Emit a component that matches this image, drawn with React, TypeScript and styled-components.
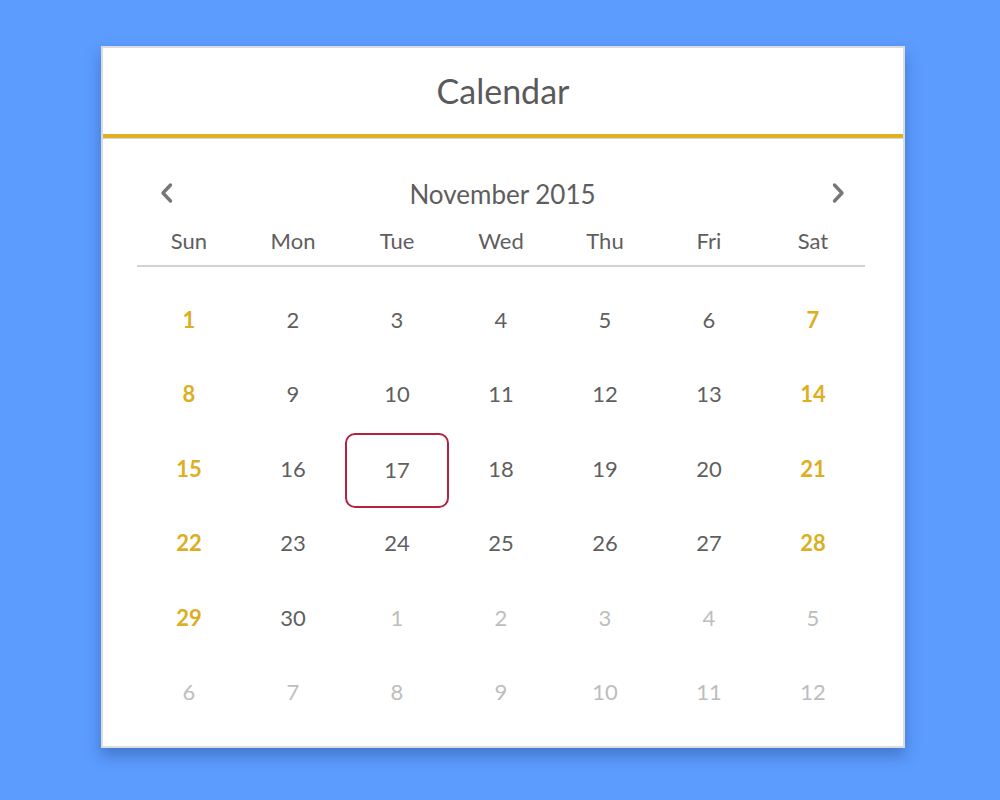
import React from "react";
import styled, { createGlobalStyle, css } from "styled-components";

const Global = createGlobalStyle`
  html, body { margin: 0; padding: 0; }
  body {
    background: #5c9cff;
    font-family: "Lato", "Open Sans", sans-serif;
    width: 1000px;
    height: 800px;
    overflow: hidden;
  }
`;

const Page = styled.div`
  padding-top: 46px;
  padding-left: 101px;
`;

const Card = styled.div`
  width: 804px;
  box-sizing: border-box;
  background: #fff;
  border: 2px solid #dcdcdc;
  box-shadow: 0 8px 14px rgba(20, 50, 110, 0.35);
  padding-bottom: 15px;
`;

const Header = styled.div`
  height: 86px;
  display: flex;
  align-items: center;
  justify-content: center;
  border-bottom: 4px solid #dfb125;
  box-shadow: 0 1px 0 #d8d8d8;
`;

const Title = styled.h1`
  margin: 0;
  font-size: 34px;
  font-weight: 400;
  color: #5a5a5a;
  padding-bottom: 2px;
`;

const Body = styled.div`
  width: 728px;
  margin: 0 0 0 34px;
`;

const Nav = styled.div`
  display: flex;
  align-items: center;
  justify-content: space-between;
  height: 30px;
  margin-top: 38px;
  padding: 0 17px 0 20px;
`;

const Month = styled.div`
  font-size: 26px;
  color: #5e5e5e;
  padding-top: 5px;
`;

const Arrow = styled.button`
  border: 0;
  background: none;
  padding: 0;
  width: 20px;
  height: 24px;
  display: flex;
  align-items: center;
  justify-content: center;
  cursor: pointer;
  margin-top: 3px;
`;

const Grid = styled.div`
  display: grid;
  grid-template-columns: repeat(7, 104px);
`;

const WeekHead = styled(Grid)`
  border-bottom: 2px solid #d2d2d2;
  height: 46px;
  align-items: center;
  margin-top: 13px;
  margin-bottom: 17px;
`;

const DayName = styled.div`
  text-align: center;
  font-size: 22px;
  color: #5e5e5e;
  padding-bottom: 3px;
`;

type Kind = "normal" | "weekend" | "other";

const Cell = styled.div<{ $kind: Kind; $selected?: boolean }>`
  height: 74.5px;
  box-sizing: border-box;
  display: flex;
  align-items: center;
  justify-content: center;
  font-size: 22px;
  padding-bottom: 4px;
  border-radius: 10px;
  border: 2px solid transparent;
  color: #5f5f5f;
  ${(p) =>
    p.$kind === "weekend" &&
    css`
      color: #ddae1f;
      font-weight: 700;
    `}
  ${(p) =>
    p.$kind === "other" &&
    css`
      color: #bdbdbd;
    `}
  ${(p) =>
    p.$selected &&
    css`
      border-color: #b5223f;
      padding-top: 2px;
    `}
`;

const Chevron = ({ dir }: { dir: "left" | "right" }) => (
  <svg width="16" height="22" viewBox="0 0 16 22">
    <path
      d={dir === "left" ? "M11.5 3 L4 11 L11.5 19" : "M4.5 3 L12 11 L4.5 19"}
      fill="none"
      stroke="#777"
      strokeWidth="3.4"
      strokeLinecap="round"
      strokeLinejoin="round"
    />
  </svg>
);

const days = ["Sun", "Mon", "Tue", "Wed", "Thu", "Fri", "Sat"];

const cells: { n: number; other: boolean }[] = [];
for (let i = 1; i <= 30; i++) cells.push({ n: i, other: false });
for (let i = 1; i <= 12; i++) cells.push({ n: i, other: true });

export default function App() {
  return (
    <>
      <Global />
      <Page>
        <Card>
          <Header>
            <Title>Calendar</Title>
          </Header>
          <Body>
            <Nav>
              <Arrow aria-label="Previous month">
                <Chevron dir="left" />
              </Arrow>
              <Month>November 2015</Month>
              <Arrow aria-label="Next month">
                <Chevron dir="right" />
              </Arrow>
            </Nav>
            <WeekHead>
              {days.map((d) => (
                <DayName key={d}>{d}</DayName>
              ))}
            </WeekHead>
            <Grid>
              {cells.map((c, i) => {
                const col = i % 7;
                const kind: Kind = c.other
                  ? "other"
                  : col === 0 || col === 6
                  ? "weekend"
                  : "normal";
                return (
                  <Cell
                    key={i}
                    $kind={kind}
                    $selected={!c.other && c.n === 17}
                  >
                    {c.n}
                  </Cell>
                );
              })}
            </Grid>
          </Body>
        </Card>
      </Page>
    </>
  );
}
